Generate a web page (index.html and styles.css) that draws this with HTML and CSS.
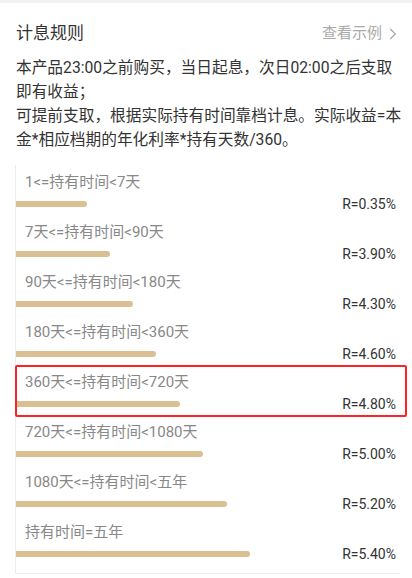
FILE: index.html
```html
<!DOCTYPE html>
<html lang="zh">
<head>
<meta charset="utf-8">
<link rel="stylesheet" href="styles.css">
</head>
<body>
<div class="topbar"></div>
<div class="header">
  <div class="title">计息规则</div>
  <div class="more">查看示例<svg class="chev" width="8" height="12" viewBox="0 0 8 12"><path d="M1.2 1 L6.4 6 L1.2 11" fill="none" stroke="#aaa" stroke-width="1.3"/></svg></div>
</div>
<div class="desc">
  <p>本产品23:00之前购买，当日起息，次日02:00之后支取即有收益；</p>
  <p>可提前支取，根据实际持有时间靠档计息。实际收益=本金*相应档期的年化利率*持有天数/360。</p>
</div>
<div class="chart">
  <div class="row"><div class="label">1&lt;=持有时间&lt;7天</div><div class="barline"><div class="bar" style="width:71px"></div><div class="rate">R=0.35%</div></div></div>
  <div class="row"><div class="label">7天&lt;=持有时间&lt;90天</div><div class="barline"><div class="bar" style="width:94px"></div><div class="rate">R=3.90%</div></div></div>
  <div class="row"><div class="label">90天&lt;=持有时间&lt;180天</div><div class="barline"><div class="bar" style="width:117px"></div><div class="rate">R=4.30%</div></div></div>
  <div class="row"><div class="label">180天&lt;=持有时间&lt;360天</div><div class="barline"><div class="bar" style="width:140px"></div><div class="rate">R=4.60%</div></div></div>
  <div class="row highlight"><div class="label">360天&lt;=持有时间&lt;720天</div><div class="barline"><div class="bar" style="width:164px"></div><div class="rate">R=4.80%</div></div></div>
  <div class="row"><div class="label">720天&lt;=持有时间&lt;1080天</div><div class="barline"><div class="bar" style="width:187px"></div><div class="rate">R=5.00%</div></div></div>
  <div class="row"><div class="label">1080天&lt;=持有时间&lt;五年</div><div class="barline"><div class="bar" style="width:211px"></div><div class="rate">R=5.20%</div></div></div>
  <div class="row"><div class="label">持有时间=五年</div><div class="barline"><div class="bar" style="width:234px"></div><div class="rate">R=5.40%</div></div></div>
</div>
</body>
</html>
```
FILE: styles.css
```css
* { box-sizing: border-box; }
html, body {
  margin: 0;
  padding: 0;
  background: #fff;
  font-family: Roboto, "Noto Sans CJK SC", sans-serif;
  color: #333;
}
.topbar {
  height: 3px;
  background: #f2f2f2;
}
.header {
  display: flex;
  justify-content: space-between;
  align-items: center;
  padding: 19px 15px 0 16px;
  height: 42px;
}
.title {
  font-size: 17px;
  line-height: 23px;
  color: #333;
}
.more {
  display: flex;
  align-items: center;
  font-size: 15px;
  line-height: 23px;
  color: #aaa;
}
.chev {
  margin-left: 7px;
}
.desc {
  margin-top: 11px;
  padding: 0 8px 0 16px;
  font-size: 15.7px;
  line-height: 24px;
  color: #333;
}
.desc p {
  margin: 0;
}
.chart {
  margin: 13px 12px 0 15px;
  border-left: 1px solid #ececec;
  border-bottom: 1px solid #ececec;
  padding-bottom: 8px;
}
.row {
  position: relative;
  height: 50px;
  padding-top: 6px;
}
.label {
  font-size: 15px;
  line-height: 22px;
  height: 22px;
  padding-left: 9px;
  color: #888;
  white-space: nowrap;
}
.barline {
  display: flex;
  align-items: center;
  justify-content: space-between;
  height: 22px;
}
.bar {
  height: 6px;
  background: #d9bf92;
  border-radius: 0 3px 3px 0;
}
.rate {
  font-size: 14px;
  line-height: 22px;
  color: #333;
  padding-right: 4px;
}
.highlight::after {
  content: "";
  position: absolute;
  left: -1px;
  top: 0;
  right: -7px;
  bottom: -2px;
  border: 2px solid #ff2222;
  border-radius: 2px;
  pointer-events: none;
}
```
